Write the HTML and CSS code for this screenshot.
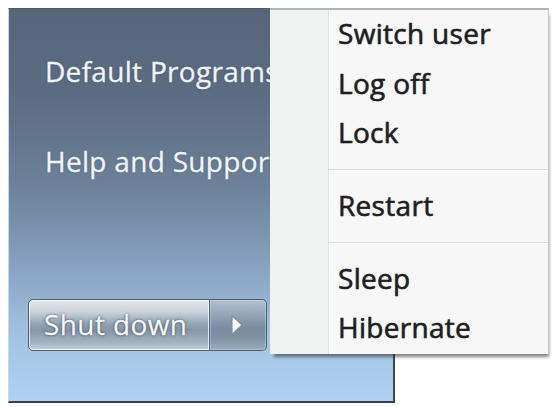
FILE: index.html
```html
<!DOCTYPE html>
<html>
<head>
<meta charset="utf-8">
<link rel="stylesheet" href="styles.css">
</head>
<body>
<div class="screen">
  <div class="startpanel">
    <div class="links">
      <div class="link">Default Programs</div>
      <div class="link">Help and Support</div>
    </div>
    <div class="shutdown">
      <div class="sd-main">Shut down</div>
      <div class="sd-arrow">
        <svg width="14" height="22" viewBox="0 0 14 22"><path d="M2 1.5 L12 11 L2 20.5 Z" fill="#ffffff" stroke="#7f8d9d" stroke-width="1.2" stroke-linejoin="round"/></svg>
      </div>
    </div>
  </div>
  <div class="menu">
    <div class="gutter"></div>
    <div class="items">
      <div class="item">Switch user</div>
      <div class="item">Log off</div>
      <div class="item">Lock</div>
      <div class="sep"></div>
      <div class="item">Restart</div>
      <div class="sep"></div>
      <div class="item">Sleep</div>
      <div class="item">Hibernate</div>
    </div>
  </div>
</div>
</body>
</html>
```
FILE: styles.css
```css
html, body {
  margin: 0;
  padding: 0;
  background: #ffffff;
}
.screen {
  position: relative;
  width: 554px;
  height: 407px;
  padding: 8px 0 0 8px;
  box-sizing: border-box;
  font-family: "Open Sans", "Noto Sans", sans-serif;
}
.startpanel {
  width: 387px;
  height: 395px;
  box-sizing: border-box;
  border-left: 1px solid #c9d6e3;
  border-top: 1px solid #4e5b6a;
  border-right: 2px solid #3f4650;
  border-bottom: 2px solid #3a4049;
  background: linear-gradient(180deg, #56657a 0%, #5c6c81 22%, #6c819a 45%, #87a1be 65%, #a2c1e1 82%, #b0d2f2 100%);
  padding: 42px 0 0 36px;
  display: flex;
  flex-direction: column;
}
.links {
  display: flex;
  flex-direction: column;
  gap: 50px;
}
.link {
  font-size: 28px;
  letter-spacing: 0.3px;
  line-height: 40px;
  color: #f0f4f9;
  white-space: nowrap;
  -webkit-text-stroke: 0.35px #f0f4f9;
  text-shadow: 0 0 2px rgba(40, 55, 75, 0.6);
}
.shutdown {
  margin-top: 118px;
  margin-left: -17px;
  display: flex;
  height: 52px;
  width: 239px;
}
.sd-main {
  width: 182px;
  box-sizing: border-box;
  border: 1px solid #4f6073;
  border-radius: 5px 0 0 5px;
  box-shadow: inset 0 0 0 1px rgba(255, 255, 255, 0.75);
  background: linear-gradient(180deg, #e1e7ee 0%, #c6d0da 25%, #93a3b4 48%, #8596a8 60%, #a4b3c3 85%, #c3cfdb 100%);
  color: #f6f8fa;
  font-size: 28px;
  letter-spacing: 0.4px;
  line-height: 48px;
  padding-left: 15px;
  white-space: nowrap;
  -webkit-text-stroke: 0.3px #f6f8fa;
  text-shadow: 0 0 3px rgba(45, 58, 72, 0.9), 0 0 1px rgba(45, 58, 72, 0.9);
}
.sd-arrow {
  width: 57px;
  box-sizing: border-box;
  border: 1px solid #4f5f71;
  border-left: none;
  border-radius: 0 5px 5px 0;
  box-shadow: inset 0 0 0 1px rgba(220, 230, 240, 0.35);
  background: linear-gradient(180deg, #b3c0ce 0%, #95a5b7 30%, #7c8da1 55%, #7f90a3 75%, #9aabbd 100%);
  display: flex;
  align-items: center;
  padding-left: 20px;
}
.sd-arrow svg {
  display: block;
}
.menu {
  position: absolute;
  left: 270px;
  top: 8px;
  width: 279px;
  height: 346px;
  box-sizing: border-box;
  border-top: 2px solid #b2b4b6;
  border-right: 1px solid #c4c6c8;
  background: #f7f7f7;
  display: flex;
  box-shadow: 2px 5px 3px -2px rgba(50, 50, 50, 0.6);
}
.gutter {
  width: 58px;
  background: #f0f1f1;
  border-right: 1px solid #e3e4e5;
  box-shadow: 1px 0 0 #ffffff;
}
.items {
  flex: 1;
  display: flex;
  flex-direction: column;
  padding-left: 9px;
}
.item {
  height: 50px;
  font-size: 28px;
  letter-spacing: 0.3px;
  line-height: 47px;
  color: #1f1f22;
  white-space: nowrap;
  -webkit-text-stroke: 0.45px #1f1f22;
  text-shadow: 0 0 1px rgba(30, 30, 30, 0.5);
}
.sep {
  height: 23px;
  margin-left: -9px;
  position: relative;
}
.sep::before {
  content: "";
  position: absolute;
  left: 0;
  right: 0;
  top: 10px;
  height: 1px;
  background: #dadbdc;
  box-shadow: 0 1px 0 #ffffff;
}
```
